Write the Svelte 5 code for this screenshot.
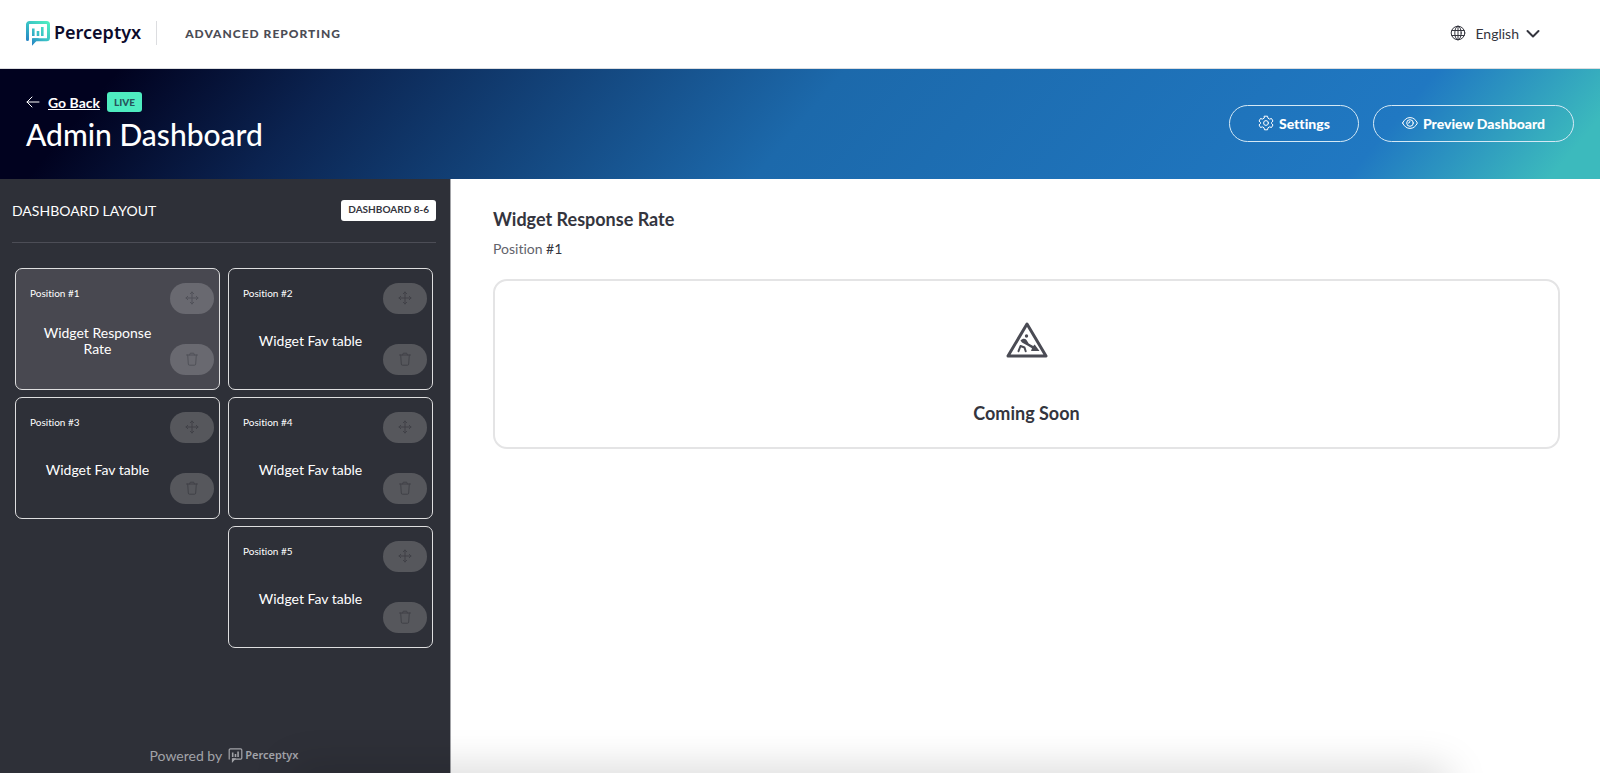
<script lang="ts">
  interface Widget {
    position: number;
    name: string;
    column: number;
  }

  const widgets: Widget[] = [
    { position: 1, name: "Widget Response Rate", column: 1 },
    { position: 2, name: "Widget Fav table", column: 2 },
    { position: 3, name: "Widget Fav table", column: 1 },
    { position: 4, name: "Widget Fav table", column: 2 },
    { position: 5, name: "Widget Fav table", column: 2 },
  ];

  let selectedIndex = $state(0);
  let selected = $derived(widgets[selectedIndex]);
</script>

{#snippet logoMark()}
  <svg class="mark" viewBox="0 0 24 25" aria-hidden="true">
    <defs>
      <linearGradient id="mark-fill" gradientUnits="userSpaceOnUse" x1="2" y1="24" x2="22" y2="2">
        <stop offset="0" stop-color="#2277c4" />
        <stop offset="0.5" stop-color="#38bfc6" />
        <stop offset="1" stop-color="#4eecc0" />
      </linearGradient>
    </defs>
    <path class="mark-line" d="M1.500 18.500V3.500a2 2 0 0 1 2-2h17a2 2 0 0 1 2 2v13.200a2 2 0 0 1-2 2H7.500" />
    <path class="mark-solid" d="M6 17.200h7L6 24.800zM6 7.500h2.600v7.500H6zM10.700 10h2.600v5h-2.600zM15 6h2.600v9H15z" />
  </svg>
{/snippet}

<div class="page">
  <header class="topbar">
    <a class="logo" href="/" aria-label="Perceptyx">
      {@render logoMark()}
      <span>Perceptyx</span>
    </a>
    <span class="product">Advanced Reporting</span>
    <button class="language" type="button">
      <svg class="globe" viewBox="0 0 16 16" aria-hidden="true">
        <circle cx="8" cy="8" r="6.800" />
        <ellipse cx="8" cy="8" rx="3.200" ry="6.800" />
        <path d="M8 1.200v13.600M1.800 5.500h12.400M1.800 10.500h12.400" />
      </svg>
      <span>English</span>
      <svg class="chevron" viewBox="0 0 14 14" aria-hidden="true">
        <path d="M1.500 5 7 10.500 12.500 5" />
      </svg>
    </button>
  </header>

  <section class="hero">
    <div class="heading">
      <div class="crumb">
        <a class="back" href="/dashboards">
          <svg viewBox="0 0 14 14" aria-hidden="true">
            <path d="M13 7H1M6 2 1 7l5 5" />
          </svg>
          <span>Go Back</span>
        </a>
        <span class="live">LIVE</span>
      </div>
      <h1>Admin Dashboard</h1>
    </div>
    <div class="actions">
      <button class="outline" type="button">
        <svg viewBox="0 0 16 16" aria-hidden="true">
          <path d="M6.500 1.200h3l.5 2 1.500.9 2-.6 1.500 2.600L13.500 7.500v1l1.500 1.400-1.500 2.600-2-.6-1.500.9-.5 2h-3l-.5-2-1.500-.9-2 .6L1 9.900l1.500-1.400v-1L1 6.100l1.500-2.600 2 .6L6 3.200z" />
          <circle cx="8" cy="8" r="2.400" />
        </svg>
        Settings
      </button>
      <button class="outline" type="button">
        <svg viewBox="0 0 16 16" aria-hidden="true">
          <path d="M.6 8C2.300 4.500 4.800 2.600 8 2.600s5.700 1.900 7.400 5.400c-1.700 3.500-4.200 5.400-7.400 5.400S2.300 11.500.6 8z" />
          <circle cx="8" cy="8" r="3.300" />
          <path d="M6.300 8.200A1.800 1.800 0 0 0 8 6.400" />
        </svg>
        Preview Dashboard
      </button>
    </div>
  </section>

  <div class="body">
    <aside class="sidebar">
      <div class="layout-head">
        <h2>DASHBOARD LAYOUT</h2>
        <span class="layout-name">DASHBOARD 8-6</span>
      </div>

      <div class="grid">
        {#each widgets as widget, index}
          <div
            class="card"
            class:selected={index === selectedIndex}
            class:right={widget.column === 2}
          >
            <button class="card-main" type="button" onclick={() => (selectedIndex = index)}>
              <span class="card-position">Position #{widget.position}</span>
              <span class="card-name">{widget.name}</span>
            </button>
            <div class="card-tools">
              <button type="button" disabled aria-label="Move widget">
                <svg viewBox="0 0 14 14" aria-hidden="true">
                  <path d="M7 1v12M1 7h12M5.300 2.700 7 1l1.700 1.700M5.300 11.300 7 13l1.700-1.700M2.700 5.300 1 7l1.700 1.700M11.300 5.300 13 7l-1.700 1.700" />
                </svg>
              </button>
              <button type="button" disabled aria-label="Delete widget">
                <svg viewBox="0 0 14 14" aria-hidden="true">
                  <path d="M1.500 3h11M4.500 3l.8-1.800h3.400L9.500 3M2.700 3l.6 9a1.200 1.200 0 0 0 1.200 1.200h5a1.200 1.200 0 0 0 1.200-1.200l.6-9" />
                </svg>
              </button>
            </div>
          </div>
        {/each}
      </div>

      <div class="powered">
        <span>Powered by</span>
        <span class="logo small">
          {@render logoMark()}
          <span>Perceptyx</span>
        </span>
      </div>
    </aside>

    <main class="content">
      <h2>{selected.name}</h2>
      <p>Position <span>#{selected.position}</span></p>
      <div class="panel">
        <svg viewBox="0 0 42 36" aria-hidden="true">
          <path class="sign" d="M21 2 40 34H2z" />
          <circle cx="20.500" cy="14" r="1.700" />
          <path d="M14.500 18.500c2-2.200 4.600-2 6-.5l2.200 3.600 4.500 2.400 1.500-1.600L33.500 29H25l1-2.700-4.600-2.700-5.400-3.200z" />
          <path class="legs" d="M12.500 29.200 14.500 24l4 1.500 1.200 3.700" />
        </svg>
        <h3>Coming Soon</h3>
      </div>
    </main>
  </div>
  <div class="edge-shadow"></div>
</div>

<style>
  :global(body) {
    margin: 0;
  }

  .page {
    position: relative;
    display: flex;
    flex-direction: column;
    min-height: 100vh;
    overflow: hidden;
    background: #fff;
    color: #34353e;
    font-family: Lato, "Open Sans", sans-serif;
    font-size: 14px;
    font-variant-ligatures: none;
  }

  .page :global(*) {
    box-sizing: border-box;
  }

  svg {
    flex: none;
    fill: none;
    stroke: currentColor;
    stroke-linecap: round;
    stroke-linejoin: round;
  }

  button {
    font: inherit;
    font-variant-ligatures: none;
    color: inherit;
    cursor: pointer;
  }

  h1,
  h2,
  h3,
  p {
    margin: 0;
  }

  .topbar {
    display: flex;
    align-items: center;
    min-height: 69px;
    padding: 0 60px 2px 26px;
    border-bottom: 1px solid #dcdde0;
  }

  .logo {
    display: flex;
    align-items: center;
    gap: 4px;
    height: 24px;
    padding-right: 15px;
    border-right: 1px solid #dcdde0;
    color: #0b0b2c;
    font-family: "Noto Sans", sans-serif;
    font-size: 18px;
    font-weight: 600;
    line-height: 20px;
    text-decoration: none;
  }

  .logo > span {
    padding-bottom: 3px;
  }

  .mark {
    width: 24px;
    height: 25px;
  }

  .mark-line {
    stroke: url(#mark-fill);
    stroke-width: 3;
  }

  .mark-solid {
    fill: url(#mark-fill);
    stroke: none;
  }

  .product {
    padding-left: 28px;
    color: #4b4c55;
    font-size: 12px;
    font-weight: 900;
    letter-spacing: 1px;
    text-transform: uppercase;
  }

  .language {
    display: flex;
    align-items: center;
    margin-left: auto;
    padding: 0;
    border: 0;
    background: none;
  }

  .globe {
    width: 16px;
    height: 16px;
    margin-right: 9px;
  }

  .chevron {
    width: 14px;
    height: 14px;
    margin-left: 7px;
    stroke-width: 2;
  }

  .hero {
    display: flex;
    align-items: center;
    justify-content: space-between;
    min-height: 110px;
    padding: 0 26px 2px;
    background: linear-gradient(130deg, #01021f 7%, #0b2350 20%, #1c69ab 50%, #2078c2 85%, #3cbabd 97%);
    color: #fff;
  }

  .heading {
    padding-bottom: 2px;
  }

  .crumb,
  .back {
    display: flex;
    align-items: center;
  }

  .crumb {
    gap: 7px;
  }

  .back {
    gap: 8px;
    color: #fff;
    font-weight: 700;
  }

  .back svg {
    width: 14px;
    height: 14px;
  }

  .live {
    padding: 0 7px;
    border-radius: 3px;
    background: #4eecc0;
    color: #27545b;
    font-size: 10px;
    font-weight: 900;
    line-height: 20px;
  }

  h1 {
    margin-top: 4px;
    font-size: 30px;
    font-weight: 500;
    line-height: 36px;
  }

  .actions {
    display: flex;
    gap: 14px;
  }

  .outline {
    display: flex;
    align-items: center;
    gap: 5px;
    height: 37px;
    padding: 0 28px;
    border: 1px solid #d5e9f5;
    border-radius: 20px;
    background: none;
    font-weight: 900;
  }

  .outline svg {
    width: 16px;
    height: 16px;
  }

  .body {
    display: flex;
    flex: 1;
  }

  .sidebar {
    display: flex;
    flex: none;
    flex-direction: column;
    width: 451px;
    padding: 21px 14px 6px 12px;
    border-right: 1px solid #a3a4a8;
    background: #2e3038;
    color: #fff;
  }

  .layout-head {
    display: flex;
    align-items: center;
    justify-content: space-between;
    padding-bottom: 21px;
    border-bottom: 1px solid #4c4d56;
  }

  .layout-head h2 {
    font-size: 14px;
    font-weight: 400;
  }

  .layout-name {
    padding: 0 7px 2px;
    border-radius: 3px;
    background: #fff;
    color: #34353e;
    font-size: 10px;
    font-weight: 700;
    line-height: 19px;
  }

  .grid {
    display: grid;
    grid-template-columns: 1fr 1fr;
    gap: 7px 8px;
    padding: 25px 3px 25px 3px;
  }

  .card {
    display: flex;
    grid-column: 1;
    min-height: 122px;
    border: 1px solid #dededf;
    border-radius: 7px;
  }

  .card.right {
    grid-column: 2;
  }

  .card.selected {
    background: #484850;
  }

  .card-main {
    display: flex;
    flex: 1;
    flex-direction: column;
    padding: 15px 0 10px 14px;
    border: 0;
    background: none;
  }

  .card-position {
    font-size: 10px;
    line-height: 18px;
    text-align: left;
  }

  .card-name {
    display: flex;
    flex: 1;
    align-items: center;
    justify-content: center;
    padding: 0 10px;
    line-height: 16px;
    text-align: center;
  }

  .card-tools {
    display: flex;
    flex-direction: column;
    justify-content: space-between;
    padding: 14px 5px;
  }

  .card-tools button {
    display: flex;
    align-items: center;
    justify-content: center;
    width: 44px;
    height: 31px;
    padding: 0 0 2px;
    border: 0;
    border-radius: 16px;
    background: #56575c;
    color: #404147;
    cursor: default;
  }

  .card.selected .card-tools button {
    background: #696970;
    color: #505158;
  }

  .card-tools svg {
    width: 14px;
    height: 14px;
  }

  .powered {
    display: flex;
    align-items: center;
    justify-content: center;
    gap: 6px;
    margin-top: auto;
    color: #a2a3a8;
  }

  .logo.small {
    gap: 2px;
    padding: 0;
    border: 0;
    color: inherit;
    font-size: 11px;
  }

  .small > span {
    padding: 0;
  }

  .small .mark {
    width: 15px;
    height: 15px;
  }

  .small .mark-line {
    stroke: currentColor;
    stroke-width: 2;
  }

  .small .mark-solid {
    fill: currentColor;
  }

  .content {
    flex: 1;
    padding: 28px 40px 40px 42px;
  }

  .content h2,
  .content h3 {
    font-size: 18px;
    font-weight: 700;
    line-height: 24px;
  }

  .content p {
    margin-top: 8px;
    color: #62636b;
    line-height: 20px;
  }

  .content p span {
    color: #34353e;
  }

  .panel {
    display: flex;
    flex-direction: column;
    align-items: center;
    margin-top: 20px;
    padding: 41px 20px 22px;
    border: 2px solid #e4e4e5;
    border-radius: 14px;
  }

  .panel svg {
    width: 42px;
    height: 36px;
    color: #4a4b54;
    fill: currentColor;
    stroke: none;
  }

  .panel .sign,
  .panel .legs {
    fill: none;
    stroke: currentColor;
    stroke-width: 3;
  }

  .panel .legs {
    stroke-width: 2;
  }

  .panel h3 {
    margin-top: 43px;
  }

  .edge-shadow {
    position: absolute;
    right: 160px;
    bottom: -24px;
    left: 300px;
    height: 20px;
    box-shadow: 0 0 40px 8px rgba(0, 0, 0, 0.17);
  }
</style>
